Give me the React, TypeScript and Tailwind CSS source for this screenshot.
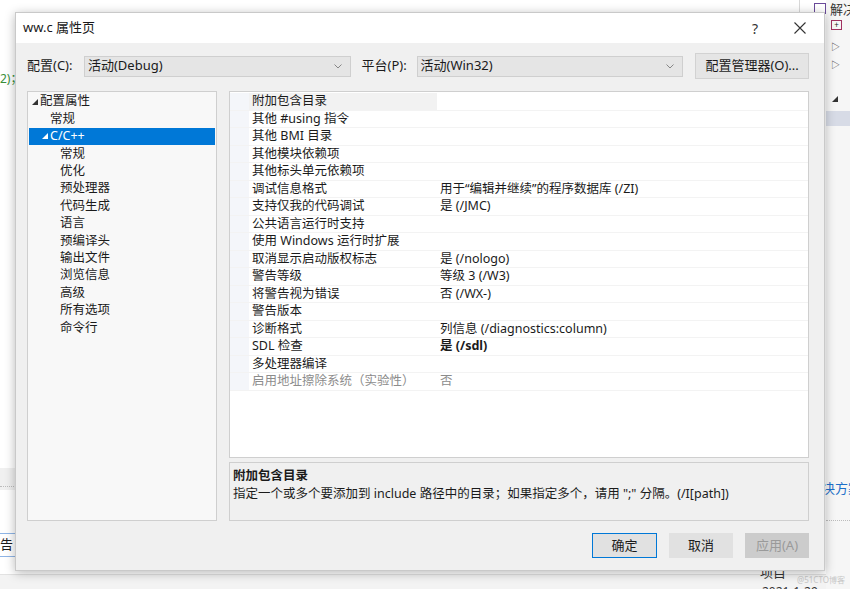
import React from "react";

const tree: { label: string; level: number; expander?: boolean; selected?: boolean }[] = [
  { label: "配置属性", level: 0, expander: true },
  { label: "常规", level: 1 },
  { label: "C/C++", level: 1, expander: true, selected: true },
  { label: "常规", level: 2 },
  { label: "优化", level: 2 },
  { label: "预处理器", level: 2 },
  { label: "代码生成", level: 2 },
  { label: "语言", level: 2 },
  { label: "预编译头", level: 2 },
  { label: "输出文件", level: 2 },
  { label: "浏览信息", level: 2 },
  { label: "高级", level: 2 },
  { label: "所有选项", level: 2 },
  { label: "命令行", level: 2 },
];

const rows: { name: string; value: string; bold?: boolean; disabled?: boolean; selected?: boolean }[] = [
  { name: "附加包含目录", value: "", selected: true },
  { name: "其他 #using 指令", value: "" },
  { name: "其他 BMI 目录", value: "" },
  { name: "其他模块依赖项", value: "" },
  { name: "其他标头单元依赖项", value: "" },
  { name: "调试信息格式", value: "用于“编辑并继续”的程序数据库 (/ZI)" },
  { name: "支持仅我的代码调试", value: "是 (/JMC)" },
  { name: "公共语言运行时支持", value: "" },
  { name: "使用 Windows 运行时扩展", value: "" },
  { name: "取消显示启动版权标志", value: "是 (/nologo)" },
  { name: "警告等级", value: "等级 3 (/W3)" },
  { name: "将警告视为错误", value: "否 (/WX-)" },
  { name: "警告版本", value: "" },
  { name: "诊断格式", value: "列信息 (/diagnostics:column)" },
  { name: "SDL 检查", value: "是 (/sdl)", bold: true },
  { name: "多处理器编译", value: "" },
  { name: "启用地址擦除系统（实验性）", value: "否", disabled: true },
];

function Tri({ white }: { white?: boolean }) {
  return (
    <svg width="6" height="6" viewBox="0 0 6 6" className="shrink-0">
      <polygon points="6,0 6,6 0,6" fill={white ? "#ffffff" : "#333333"} />
    </svg>
  );
}

function Chevron() {
  return (
    <svg width="8" height="5" viewBox="0 0 8 5">
      <polyline points="0.5,0.5 4,4 7.5,0.5" fill="none" stroke="#7a7a7a" strokeWidth="0.9" />
    </svg>
  );
}

function Combo({ text, width }: { text: string; width: string }) {
  return (
    <div className={`${width} h-[21px] flex items-center justify-between bg-[#e5e5e5] border border-[#cfcfcf] pl-[3px] pr-[8px]`}>
      <span className="text-[13px] text-[#1a1a1a]">{text}</span>
      <Chevron />
    </div>
  );
}

export default function App() {
  return (
    <div className="relative w-[850px] h-[589px] overflow-hidden bg-white font-[Noto_Sans,Noto_Sans_CJK_SC,sans-serif] text-[#1b1b1b]">
      {/* background app fragments */}
      <div className="absolute left-0 top-[70px] text-[12px] text-[#3a8f3a] whitespace-nowrap">2)；</div>
      <div className="absolute left-0 top-[468px] w-[20px] h-[22px] bg-[#f0f0f0]" />
      <div className="absolute left-0 top-[486px] w-[20px] border-t border-dotted border-[#bcbcbc]" />
      <div className="absolute left-0 top-[533px] w-[20px] h-[24px] border-y border-[#8fb5e6] flex items-center text-[13px]">
        <span className="whitespace-nowrap">告</span>
      </div>
      <div className="absolute left-0 top-[574px] w-[850px] h-[15px] bg-[#f3f3f3] border-t border-[#e2e2e2]" />
      <div className="absolute left-[799px] top-0 h-[14px] border-l border-[#d8d8d8]" />
      <div className="absolute left-[826px] top-0 w-[24px] h-[589px] bg-[#f6f6f6]" />
      <div className="absolute left-[814px] top-[3px] w-[12px] h-[11px] border border-[#6a4a9a] bg-white" />
      <div className="absolute left-[830px] top-[0px] text-[13px] text-[#333] whitespace-nowrap">解决</div>
      <div className="absolute left-[831px] top-[20px] w-[11px] h-[10px] border border-[#a03060] text-[8px] leading-[8px] text-center">+</div>
      <div className="absolute left-[831px] top-[40px] text-[9px] text-[#444]">▷</div>
      <div className="absolute left-[831px] top-[58px] text-[9px] text-[#444]">▷</div>
      <div className="absolute left-[832px] top-[96px]"><Tri /></div>
      <div className="absolute left-[826px] top-[111px] w-[24px] h-[15px] bg-[#d7dbe6]" />
      <div className="absolute left-[822px] top-[479px] text-[13px] text-[#1d6fc9] whitespace-nowrap">决方案</div>
      <div className="absolute left-[826px] top-[520px] w-[24px] border-t border-dotted border-[#bcbcbc]" />
      <div className="absolute left-[760px] top-[563px] text-[13px] text-[#333] whitespace-nowrap">项目</div>
      <div className="absolute left-[762px] top-[583px] text-[12px] text-[#333] whitespace-nowrap">2021-1-29</div>
      <div className="absolute left-[797px] top-[574px] text-[8px] text-[#c8c8c8] whitespace-nowrap">@51CTO博客</div>

      {/* dialog */}
      <div className="absolute left-[15px] top-[12px] w-[810px] h-[559px] flex flex-col bg-[#f0f0f0] border border-[#c9c9c9] shadow-[0_2px_10px_rgba(0,0,0,0.28)]">
        <div className="h-[30px] shrink-0 bg-white flex items-center pl-[7px] pr-[14px]">
          <span className="text-[13px] text-[#1a1a1a]">ww.c 属性页</span>
          <div className="flex-1" />
          <span className="text-[14px] text-[#333] mr-[36px]">?</span>
          <svg width="12" height="12" viewBox="0 0 12 12" className="mr-[4px]">
            <path d="M0.5 0.5 L11.5 11.5 M11.5 0.5 L0.5 11.5" stroke="#333" strokeWidth="1.1" />
          </svg>
        </div>

        <div className="flex-1 flex flex-col pl-[11px] pr-[15px]">
          <div className="mt-[10px] h-[26px] flex items-center">
            <span className="w-[57px] text-[13px]">配置(C):</span>
            <Combo text="活动(Debug)" width="w-[267px]" />
            <span className="ml-[11px] w-[55px] text-[13px]">平台(P):</span>
            <Combo text="活动(Win32)" width="w-[267px]" />
            <div className="ml-[12px] w-[114px] h-[26px] flex items-center justify-center bg-[#e5e5e5] border border-[#d2d2d2] text-[13px]">
              配置管理器(O)...
            </div>
          </div>

          <div className="mt-[12px] h-[430px] flex gap-[12px]">
            <div className="w-[190px] shrink-0 bg-[#f8f8f8] border border-[#cfcfcf] pt-[1px] px-[1px]">
              {tree.map((t, i) => {
                const pl = t.level === 0 ? 3 : t.level === 1 ? (t.expander ? 13 : 21) : 31;
                return (
                  <div
                    key={i}
                    className={`h-[17.4px] flex items-center gap-[2px] text-[12.5px] leading-none ${t.selected ? "bg-[#0078d7] text-white" : ""}`}
                    style={{ paddingLeft: pl }}
                  >
                    {t.expander && <Tri white={t.selected} />}
                    <span>{t.label}</span>
                  </div>
                );
              })}
            </div>

            <div className="flex-1 flex flex-col gap-[4px]">
              <div className="h-[367px] bg-white border border-[#cfcfcf] pt-[1px]">
                {rows.map((r, i) => (
                  <div key={i} className="h-[17.5px] flex border-b border-[#f3f3f3] text-[12.5px] leading-none">
                    <div className="w-[19px] shrink-0 bg-[#f4f6fa]" />
                    <div className={`w-[188px] shrink-0 flex items-center pl-[3px] ${r.selected ? "bg-[#f2f2f2]" : ""} ${r.disabled ? "text-[#8c8c8c]" : ""}`}>
                      {r.name}
                    </div>
                    <div className={`flex-1 flex items-center pl-[3px] ${r.bold ? "font-bold" : ""} ${r.disabled ? "text-[#8c8c8c]" : ""}`}>
                      {r.value}
                    </div>
                  </div>
                ))}
              </div>
              <div className="flex-1 bg-[#f0f0f0] border border-[#cfcfcf] px-[3px] pt-[4px] text-[12.5px]">
                <div className="font-bold leading-[18px]">附加包含目录</div>
                <div className="leading-[18px]">指定一个或多个要添加到 include 路径中的目录；如果指定多个，请用 ";" 分隔。(/I[path])</div>
              </div>
            </div>
          </div>

          <div className="mt-[12px] flex justify-end gap-[12px]">
            <div className="w-[65px] h-[25px] flex items-center justify-center bg-[#e1e1e1] border border-[#0078d7] text-[13px]">确定</div>
            <div className="w-[64px] h-[25px] flex items-center justify-center bg-[#e1e1e1] border border-[#e1e1e1] text-[13px]">取消</div>
            <div className="w-[64px] h-[25px] flex items-center justify-center bg-[#cccccc] border border-[#cccccc] text-[13px] text-[#9a9a9a]">应用(A)</div>
          </div>
        </div>
      </div>
    </div>
  );
}
